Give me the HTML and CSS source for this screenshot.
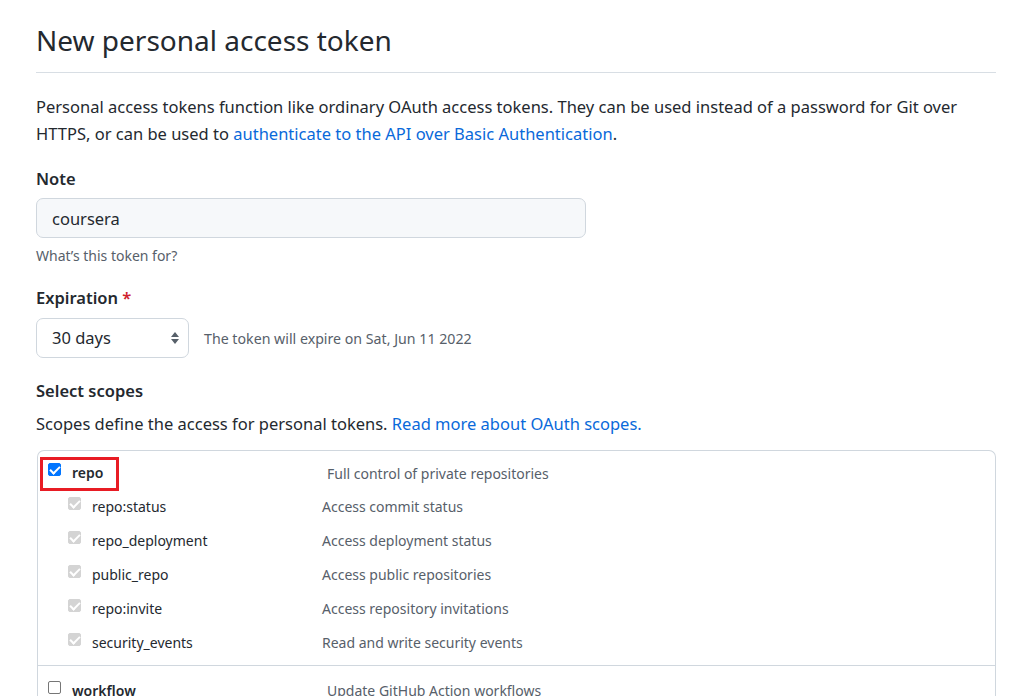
FILE: index.html
```html
<!DOCTYPE html>
<html>
<head>
<meta charset="utf-8">
<link rel="stylesheet" href="styles.css">
</head>
<body>
<div class="page">
  <h2 class="subhead">New personal access token</h2>
  <p class="intro">Personal access tokens function like ordinary OAuth access tokens. They can be used instead of a password for Git over HTTPS, or can be used to <a href="#">authenticate to the API over Basic Authentication</a>.</p>

  <div class="field">
    <div class="label">Note</div>
    <div class="input">coursera</div>
    <div class="note">What’s this token for?</div>
  </div>

  <div class="field exp">
    <div class="label">Expiration <span class="req">*</span></div>
    <div class="exp-row">
      <div class="select">30 days
        <svg class="caret" width="10" height="16" viewBox="0 0 10 16"><path d="M5 2 L9 7 H1 Z M5 14 L9 9 H1 Z" fill="#57606a"/></svg>
      </div>
      <span class="exp-note">The token will expire on Sat, Jun 11 2022</span>
    </div>
  </div>

  <div class="label scopes-label">Select scopes</div>
  <p class="scopes-desc">Scopes define the access for personal tokens. <a href="#">Read more about OAuth scopes.</a></p>

  <div class="scopes">
    <div class="group">
      <div class="row top">
        <div class="name"><span class="hl"><span class="cb checked"></span><b>repo</b></span></div>
        <div class="desc">Full control of private repositories</div>
      </div>
      <div class="row sub"><div class="name"><span class="cb dis"></span>repo:status</div><div class="desc">Access commit status</div></div>
      <div class="row sub"><div class="name"><span class="cb dis"></span>repo_deployment</div><div class="desc">Access deployment status</div></div>
      <div class="row sub"><div class="name"><span class="cb dis"></span>public_repo</div><div class="desc">Access public repositories</div></div>
      <div class="row sub"><div class="name"><span class="cb dis"></span>repo:invite</div><div class="desc">Access repository invitations</div></div>
      <div class="row sub"><div class="name"><span class="cb dis"></span>security_events</div><div class="desc">Read and write security events</div></div>
    </div>
    <div class="group">
      <div class="row top">
        <div class="name"><span class="cb"></span><b>workflow</b></div>
        <div class="desc">Update GitHub Action workflows</div>
      </div>
    </div>
  </div>
</div>
</body>
</html>
```
FILE: styles.css
```css
* { box-sizing: border-box; }
html, body { margin: 0; padding: 0; background: #fff; }
body {
  font-family: "Noto Sans", "Open Sans", sans-serif;
  color: #24292f;
  overflow: hidden;
}
.page { padding: 0 20px 0 36px; width: 1016px; }
.subhead {
  margin: 0;
  padding: 21px 0 13px;
  font-size: 28px;
  font-weight: 400;
  line-height: 38px;
  border-bottom: 1px solid #d8dee4;
}
.intro {
  margin: 20px 0 0;
  font-size: 16.5px;
  line-height: 27px;
}
a { color: #0969da; text-decoration: none; }
.field { margin-top: 20px; }
.label { font-size: 16.5px; font-weight: 600; line-height: 24px; }
.input {
  margin-top: 7px;
  width: 550px;
  height: 40px;
  border: 1px solid #d0d7de;
  border-radius: 7px;
  background: #f6f8fa;
  font-size: 16.5px;
  line-height: 40px;
  padding-left: 15px;
}
.note { margin-top: 8px; font-size: 14px; line-height: 20px; color: #57606a; }
.exp { margin-top: 20px; }
.req { color: #cf222e; }
.exp-row { display: flex; align-items: center; margin-top: 8px; gap: 15px; }
.select {
  width: 153px;
  height: 40px;
  border: 1px solid #d0d7de;
  border-radius: 7px;
  font-size: 16.5px;
  line-height: 38px;
  padding-left: 15px;
  display: flex;
  justify-content: space-between;
  align-items: center;
  padding-right: 8px;
}
.exp-note { font-size: 14.2px; color: #57606a; }
.scopes-label { margin-top: 21px; }
.scopes-desc { margin: 9px 0 0; font-size: 16.5px; line-height: 24px; }
.scopes {
  margin-top: 14px;
  border: 1px solid #d0d7de;
  border-radius: 7px;
  border-bottom: none;
  margin-left: 1px;
}
.group { padding: 7px 0 6px 10px; }
.group + .group { border-top: 1px solid #d0d7de; padding-top: 8px; }
.row { display: flex; align-items: center; font-size: 14px; }
.row.top { height: 33px; }
.group:first-child .row.top { height: 31px; }
.row.sub { height: 34px; padding-left: 20px; }
.name { display: flex; align-items: center; width: 274px; }
.row.sub .name { width: 254px; }
.row.top .desc { padding-left: 5px; }
.row b { font-weight: 600; }
.desc { color: #57606a; }
.hl {
  display: flex; align-items: center;
  border: 3px solid #e81c24;
  margin-left: -8px;
  margin-right: -3px;
  padding: 4px 13px 6px 5px;
  height: 34px;
}
.cb {
  display: inline-block;
  width: 13px; height: 13px;
  border-radius: 2px;
  margin-right: 11px;
  position: relative;
  border: 1px solid #767676;
  background: #fff;
}
.row.top .cb { margin-top: -6px; }
.cb.checked { background: #0075ff; border-color: #0075ff; }
.cb.dis { background: #d4d4d4; border-color: #d4d4d4; margin-top: -6px; }
.cb.checked::after, .cb.dis::after {
  content: "";
  position: absolute;
  left: 3px; top: 0px;
  width: 4px; height: 8px;
  border: solid #fff;
  border-width: 0 2px 2px 0;
  transform: rotate(45deg);
}
```
